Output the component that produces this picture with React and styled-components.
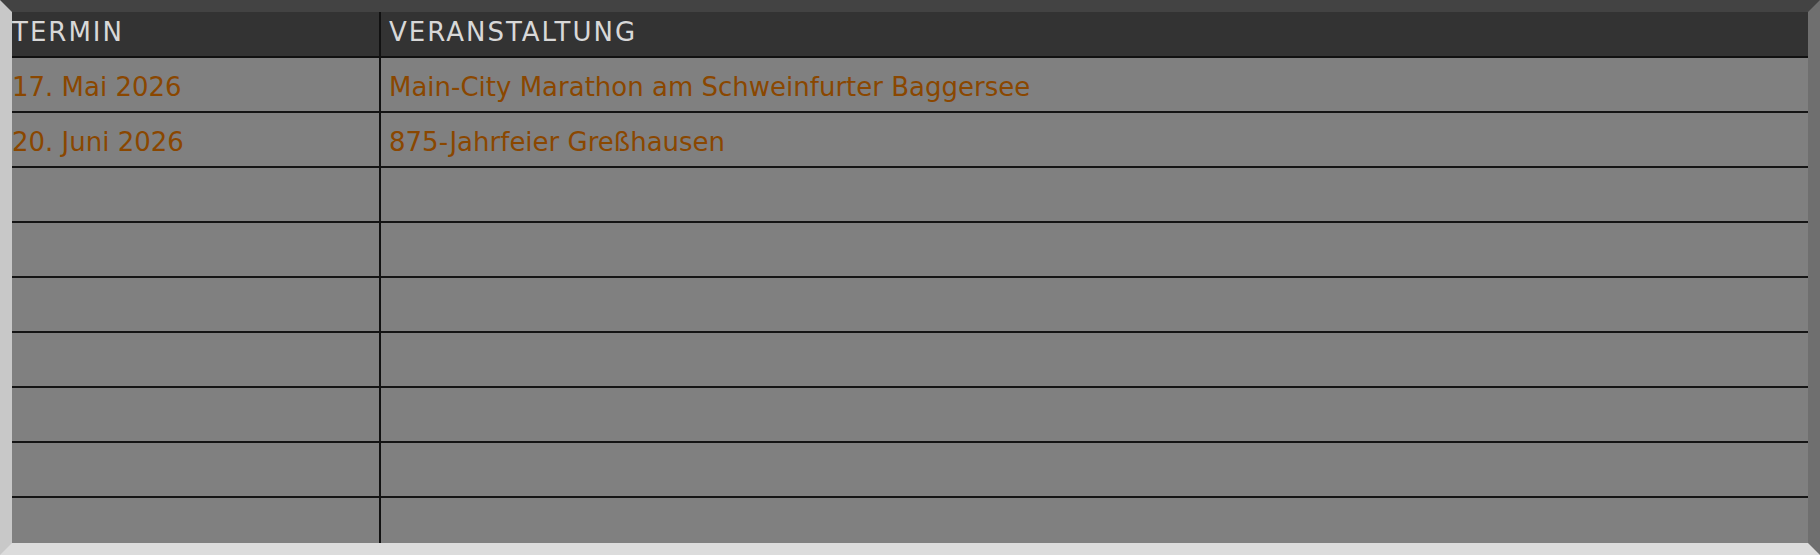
import React from 'react';
import styled, { createGlobalStyle } from 'styled-components';

const termine = [
  { datum: '17. Mai 2026', name: 'Main-City Marathon am Schweinfurter Baggersee' },
  { datum: '20. Juni 2026', name: '875-Jahrfeier Greßhausen' },
  { datum: '', name: '' },
  { datum: '', name: '' },
  { datum: '', name: '' },
  { datum: '', name: '' },
  { datum: '', name: '' },
  { datum: '', name: '' },
  { datum: '', name: '' },
];

const App = () => {
  return (
    <>
      <GlobalStyle />
      <Frame>
        <Table>
          <HeadCell first>TERMIN</HeadCell>
          <HeadCell>VERANSTALTUNG</HeadCell>
          {termine.map((t, i) => (
            <React.Fragment key={i}>
              <Cell first>{t.datum}</Cell>
              <Cell>{t.name}</Cell>
            </React.Fragment>
          ))}
        </Table>
      </Frame>
    </>
  );
};

export default App;

const GlobalStyle = createGlobalStyle`
  html, body {
    margin: 0;
    padding: 0;
    background: #808080;
  }
  * {
    box-sizing: border-box;
  }
`;

const Frame = styled.div`
  width: 1820px;
  height: 555px;
  overflow: hidden;
  background: #808080;
  border-style: solid;
  border-width: 12px;
  border-top-color: #434343;
  border-right-color: #6f6f6f;
  border-bottom-color: #dcdcdc;
  border-left-color: #c8c8c8;
`;

const Table = styled.div`
  display: grid;
  grid-template-columns: 369px 1fr;
  grid-auto-rows: 55px;
  grid-template-rows: 46px;
  font-family: "DejaVu Sans", "Liberation Sans", sans-serif;
  font-size: 26px;
`;

const HeadCell = styled.div`
  display: flex;
  align-items: center;
  padding: 0 0 4px ${p => (p.first ? '0' : '8px')};
  background: #333333;
  color: #d8d8d8;
  letter-spacing: 2px;
  border-bottom: 2px solid #111;
  border-right: ${p => (p.first ? '2px solid #111' : 'none')};
  white-space: nowrap;
`;

const Cell = styled.div`
  display: flex;
  align-items: center;
  padding: 5px 0 0 ${p => (p.first ? '0' : '8px')};
  color: #8a4700;
  border-bottom: 2px solid #141414;
  border-right: ${p => (p.first ? '2px solid #111' : 'none')};
  white-space: nowrap;
`;
